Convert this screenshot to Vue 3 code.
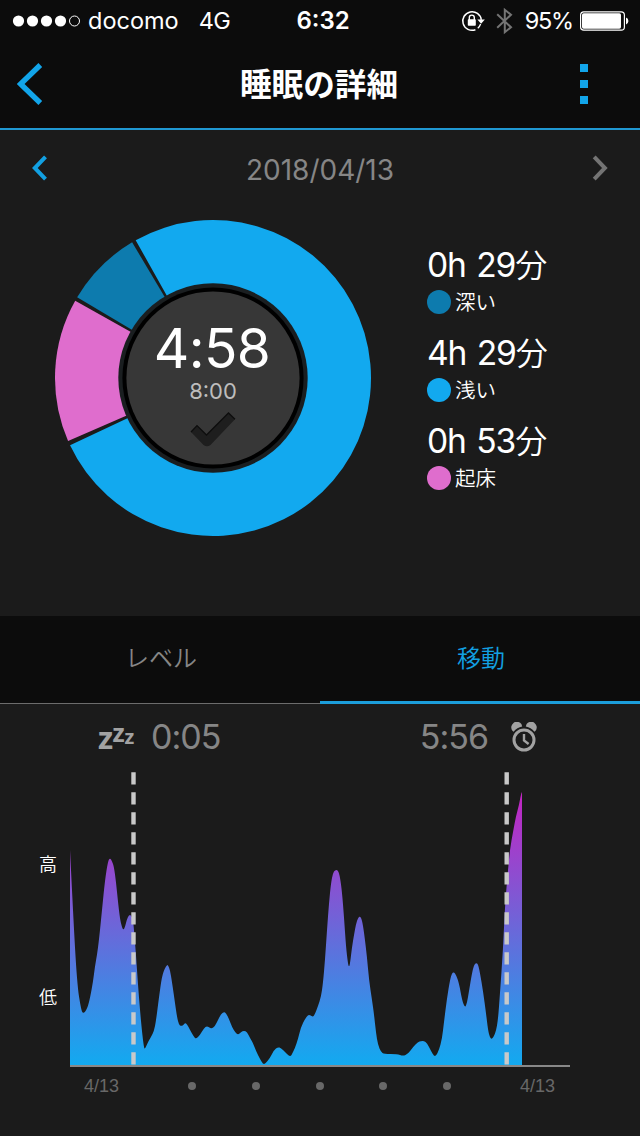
<template>
  <div class="sleep-page">
    <!-- ステータスバー -->
    <div class="status-bar">
      <div class="status-bar__left">
        <svg class="signal" width="70" height="14" viewBox="0 0 70 14">
          <circle v-for="i in 4" :key="i" :cx="i * 14 - 7.5" cy="7" r="5.6" fill="#fff" />
          <circle cx="62.5" cy="7" r="5" fill="none" stroke="#fff" stroke-width="1" />
        </svg>
        <span class="carrier">docomo</span>
        <span class="network">4G</span>
      </div>
      <div class="status-bar__time">6:32</div>
      <div class="status-bar__right">
        <svg class="lock" width="24" height="22" viewBox="0 0 24 22">
          <path d="M14.4 19.7A9.3 9.3 0 1 1 20.3 9.8" fill="none" stroke="#fff" stroke-width="1.5" />
          <path d="M16.4 9.4h7.4l-3.7 4.4z" fill="#fff" />
          <path d="M19.6 14a9.3 9.3 0 0 1-2.8 4.2" fill="none" stroke="#fff" stroke-width="1.3" />
          <rect x="6.8" y="9.3" width="8" height="6.4" rx="0.8" fill="#fff" />
          <path d="M8.3 10V7.6a2.5 2.5 0 0 1 5 0V10" fill="none" stroke="#fff" stroke-width="1.4" />
        </svg>
        <svg class="bluetooth" width="17" height="28" viewBox="0 0 17 28">
          <path d="M1.2 7.3L15 20.2L8.8 25.2V2.8L15 7.8L1.2 20.7" fill="none" stroke="#747474" stroke-width="2" />
        </svg>
        <span class="percent">95%</span>
        <svg class="battery" width="50" height="20" viewBox="0 0 50 20">
          <rect x="0.6" y="0.9" width="43.8" height="18.2" rx="3.2" fill="none" stroke="#fff" stroke-width="1.2" />
          <rect x="2" y="2.3" width="39" height="15.4" rx="1.6" fill="#fff" />
          <path d="M46 6.6a3.6 3.6 0 0 1 0 6.8z" fill="#fff" />
        </svg>
      </div>
    </div>

    <!-- ヘッダー -->
    <header class="header">
      <button class="icon-btn" aria-label="戻る">
        <svg width="26" height="42" viewBox="0 0 26 42">
          <path d="M23.3 2L3.6 21L23.3 40" fill="none" stroke="#12a5ea" stroke-width="5.4" />
        </svg>
      </button>
      <h1 class="header__title">睡眠の詳細</h1>
      <button class="icon-btn menu" aria-label="メニュー">
        <i v-for="i in 3" :key="i" class="menu__dot"></i>
      </button>
    </header>

    <!-- 日付 -->
    <div class="date-row">
      <svg width="16" height="26" viewBox="0 0 16 26">
        <path d="M13.5 1.8L2.8 13L13.5 24.2" fill="none" stroke="#12a0e2" stroke-width="4" />
      </svg>
      <span class="date-row__text">2018/04/13</span>
      <svg width="16" height="26" viewBox="0 0 16 26">
        <path d="M2.2 1.8L12.9 13L2.2 24.2" fill="none" stroke="#747474" stroke-width="4" />
      </svg>
    </div>

    <!-- 睡眠の内訳 -->
    <section class="summary">
      <div class="donut">
        <svg class="donut__svg" width="318" height="318" viewBox="-159 -159 318 318">
          <path v-for="s in slices" :key="s.color" :d="slicePath(s)" :fill="s.color" />
          <circle r="94.7" fill="#1a1e20" />
          <circle r="90.6" fill="#000" />
          <circle r="86.6" fill="#373737" />
        </svg>
        <div class="donut__center">
          <div class="donut__time">4:58</div>
          <div class="donut__goal">8:00</div>
          <svg class="donut__check" width="46" height="36" viewBox="0 0 46 36">
            <path d="M1 20L7 13.6L16.5 23L38.5 1L45 7.2L20.5 33Q17 35.6 13.5 33Z" fill="#1e1e1e" />
            <path d="M1 20L7 13.6L16.5 23L38.5 1L45 7.2" fill="none" stroke="#0d0d0d" stroke-width="1.3" />
          </svg>
        </div>
      </div>
      <ul class="legend">
        <li v-for="item in legend" :key="item.label" class="legend__item">
          <div class="legend__value">{{ item.value }}<span class="legend__unit">分</span></div>
          <div class="legend__label">
            <i class="legend__dot" :style="{ background: item.color }"></i>
            <span>{{ item.label }}</span>
          </div>
        </li>
      </ul>
    </section>

    <!-- タブ -->
    <nav class="tabs">
      <button
        v-for="tab in tabs"
        :key="tab"
        class="tab"
        :class="{ 'tab--active': tab === activeTab }"
        @click="activeTab = tab"
      >{{ tab }}</button>
    </nav>

    <!-- 移動グラフ -->
    <section class="chart">
      <div class="chart__times">
        <div class="chart__start">
          <div class="zzz">
            <span class="zzz__l">z</span>
            <span class="zzz__m">z</span>
            <span class="zzz__s">z</span>
          </div>
          <span>0:05</span>
        </div>
        <div class="chart__end">
          <span>5:56</span>
          <svg width="26" height="30" viewBox="0 0 26 30">
            <circle cx="13" cy="18" r="10" fill="none" stroke="#a2a2a2" stroke-width="3" />
            <path d="M13 12V18.4L17.6 22" fill="none" stroke="#a2a2a2" stroke-width="2.4" />
            <path d="M1.4 8.8A5.4 5.4 0 0 1 10.4 2L11.2 4.6Q6 5.6 2.6 9.8z" fill="#a2a2a2" />
            <path d="M24.6 8.8A5.4 5.4 0 0 0 15.6 2L14.8 4.6Q20 5.6 23.4 9.8z" fill="#a2a2a2" />
          </svg>
        </div>
      </div>
      <div class="chart__body">
        <div class="chart__levels">
          <span>高</span>
          <span>低</span>
        </div>
        <svg class="chart__plot" width="500" height="298" viewBox="70 770 500 298">
          <defs>
            <linearGradient id="moveFill" gradientUnits="userSpaceOnUse" x1="0" y1="792" x2="0" y2="1065">
              <stop offset="0" stop-color="#c424c2" />
              <stop offset="1" stop-color="#12aaf0" />
            </linearGradient>
          </defs>
          <path :d="areaPath" fill="url(#moveFill)" />
          <path d="M70 1066H570" stroke="#888" stroke-width="2" />
          <path
            v-for="x in [133.5, 506.7]"
            :key="x"
            :d="`M${x} 772.2V1065`"
            stroke="#c9c9c9"
            stroke-width="4.4"
            stroke-dasharray="12.4 7.6"
          />
        </svg>
      </div>
      <div class="chart__axis">
        <span>4/13</span>
        <div class="chart__ticks">
          <i v-for="i in 5" :key="i" class="chart__tick"></i>
        </div>
        <span>4/13</span>
      </div>
    </section>
  </div>
</template>

<script setup>
import { ref, computed } from 'vue'

const tabs = ['レベル', '移動']
const activeTab = ref('移動')

const legend = [
  { value: '0h 29', label: '深い', color: '#0d7bae' },
  { value: '4h 29', label: '浅い', color: '#12a9ef' },
  { value: '0h 53', label: '起床', color: '#df6dcd' },
]

// 角度は真上から時計回り
const slices = [
  { color: '#12a9ef', from: 330.7, to: 604.8 },
  { color: '#0d7bae', from: 300.7, to: 329.2 },
  { color: '#df6dcd', from: 246.5, to: 299.3 },
]

function slicePath({ from, to }) {
  const at = (deg, r) => {
    const a = (deg * Math.PI) / 180
    return `${(r * Math.sin(a)).toFixed(2)} ${(-r * Math.cos(a)).toFixed(2)}`
  }
  const large = to - from > 180 ? 1 : 0
  return `M0 0L${at(from, 158)}A158 158 0 ${large} 1 ${at(to, 158)}Z`
}

// 移動量のサンプル [x, y]
const points = [
  [70, 850], [72, 890], [74, 930], [76, 965], [78, 990], [80, 1003], [82, 1012.5], [84, 1013],
  [86, 1010.5], [88, 1006], [90, 998], [93, 982], [95, 966], [97, 955], [99, 940], [102, 910],
  [105, 880], [108, 861], [110, 858], [112, 861], [114, 867], [116, 882], [118, 902], [120, 919],
  [122, 927.5], [123.5, 930], [125, 927], [127, 919], [129, 915], [131, 915], [133, 920], [134, 930],
  [136, 955], [138, 985], [140, 1010], [142, 1032], [144, 1048], [145, 1049], [148, 1042], [151, 1037],
  [154, 1031], [156, 1021], [159, 997], [162, 976], [165, 968], [167, 965], [168, 965], [170, 970],
  [172, 982], [175, 1003], [177, 1017], [179, 1025], [181, 1026], [183, 1025.5], [185, 1023], [187, 1024],
  [190, 1030], [194, 1037], [196, 1039], [200, 1035], [204, 1028], [207, 1026], [210, 1028], [212, 1028.5],
  [215, 1026], [218, 1020], [221, 1014], [224, 1012], [226, 1013], [229, 1019], [232, 1027], [235, 1032],
  [238, 1035], [241, 1032], [244, 1030.5], [247, 1032], [250, 1038], [253, 1043], [256, 1051], [260, 1059],
  [263, 1064], [265, 1064], [270, 1058], [274, 1050], [278, 1047], [281, 1048], [285, 1052], [289, 1056],
  [291, 1056], [292, 1054], [295, 1048], [298, 1039], [301, 1027], [305, 1019], [308, 1015], [310, 1015],
  [313, 1017], [315, 1014], [318, 1006], [321, 997], [323, 983], [325, 960], [327, 930], [329, 903],
  [331, 883], [333, 873], [335, 870], [338, 870], [340, 877], [342, 892], [344, 917], [346, 947],
  [348, 964], [349, 967], [350, 964], [352, 947], [354, 935], [356, 924], [358, 918], [360, 916],
  [362, 920], [364, 932], [367, 957], [369, 980], [372, 1000], [374, 1014], [376, 1033], [378, 1045],
  [381, 1052], [384, 1054], [397, 1054], [403, 1056], [408, 1054], [413, 1047], [418, 1042], [421, 1041],
  [424, 1041], [427, 1043], [431, 1051], [434, 1056], [436, 1056], [439, 1050], [442, 1039], [444, 1022],
  [447, 998], [450, 980], [452, 973], [454, 972], [456, 975], [459, 983], [462, 1000], [465, 1008],
  [467, 1003], [469, 991], [472, 973], [474, 965], [476, 963], [478, 964], [480, 973], [483, 991],
  [486, 1013], [488, 1030], [490, 1038], [492, 1039], [494, 1036], [496, 1031], [498, 1020], [500, 993],
  [503, 950], [505, 905], [508, 870], [510, 849], [513, 832], [516, 816], [519, 805], [521, 794],
  [522, 792],
]

// 中点をつないで滑らかにする
const areaPath = computed(() => {
  let d = `M70 1066L${points[0].join(' ')}`
  for (let i = 1; i < points.length - 1; i++) {
    const [x, y] = points[i]
    const [nx, ny] = points[i + 1]
    d += `Q${x} ${y} ${(x + nx) / 2} ${(y + ny) / 2}`
  }
  return `${d}L522 792V1066Z`
})
</script>

<style>
body {
  background: #1b1b1b;
}
</style>

<style scoped>
.sleep-page {
  width: 640px;
  height: 1136px;
  overflow: hidden;
  background: #1b1b1b;
  color: #fff;
  font-family: Inter, "Noto Sans CJK JP", sans-serif;
}

svg {
  display: block;
  flex: none;
}

button {
  padding: 0;
  border: none;
  background: none;
  font-family: inherit;
  cursor: pointer;
}

.status-bar {
  display: grid;
  grid-template-columns: 1fr auto 1fr;
  align-items: center;
  height: 41px;
  padding: 0 10px 0 12px;
  background: #0c0c0c;
  font-size: 23.5px;
  line-height: 41px;
}

.status-bar__left,
.status-bar__right {
  display: flex;
  align-items: center;
}

.status-bar__right {
  justify-content: flex-end;
}

.status-bar__time {
  padding-left: 4px;
  font-size: 24px;
  font-weight: 600;
}

.carrier {
  margin-left: 6px;
}

.network {
  margin-left: 20px;
  letter-spacing: -0.5px;
}

.bluetooth {
  margin-left: 11px;
}

.percent {
  margin: 0 7px 0 12px;
  letter-spacing: -1.2px;
}

.header {
  display: flex;
  align-items: center;
  justify-content: space-between;
  box-sizing: border-box;
  height: 89px;
  padding: 0 52px 2px 17px;
  border-bottom: 2px solid #2098d2;
  background: #0c0c0c;
}

.icon-btn {
  width: 26px;
}

.header__title {
  margin: 2px 0 0 33px;
  font-size: 31.6px;
  font-weight: 700;
  line-height: 46px;
}

.menu {
  display: flex;
  flex-direction: column;
  align-items: flex-end;
  gap: 8px;
}

.menu__dot {
  width: 8px;
  height: 8px;
  background: #12a5ea;
}

.date-row {
  display: flex;
  align-items: center;
  justify-content: space-between;
  height: 76px;
  padding: 0 32px;
}

.date-row__text {
  padding-top: 3px;
  color: #868686;
  font-size: 28px;
}

.summary {
  display: flex;
  height: 410px;
}

.donut {
  display: grid;
  margin: 13px 0 0 54px;
}

.donut__svg,
.donut__center {
  grid-area: 1 / 1;
}

.donut__center {
  display: flex;
  flex-direction: column;
  align-items: center;
  padding-top: 105px;
}

.donut__time {
  padding-right: 2px;
  font-size: 55px;
  line-height: 48px;
  letter-spacing: -0.6px;
}

.donut__goal {
  margin-top: 8px;
  color: #bdbdbd;
  font-size: 22px;
  line-height: 22px;
}

.donut__check {
  margin-top: 10px;
}

.legend {
  margin: 34px 0 0 55px;
  padding: 0;
  list-style: none;
}

.legend__item {
  height: 88px;
}

.legend__value {
  height: 50px;
  font-size: 33.6px;
  line-height: 50px;
  letter-spacing: -1.1px;
  word-spacing: 2px;
  white-space: nowrap;
}

.legend__unit {
  font-size: 32px;
  font-weight: 350;
  line-height: 1;
}

.legend__label {
  display: flex;
  align-items: center;
  gap: 4px;
  height: 24px;
  font-size: 20.5px;
  font-weight: 350;
  line-height: 24px;
}

.legend__label span {
  padding-top: 2px;
}

.legend__dot {
  width: 24px;
  height: 24px;
  border-radius: 50%;
}

.tabs {
  display: flex;
  height: 88px;
  background: #0c0c0c;
}

.tab {
  box-sizing: border-box;
  flex: 1;
  padding: 0 0 7px 2px;
  border-bottom: 1px solid #6c6c6c;
  color: #868686;
  font-size: 24px;
  font-weight: 350;
}

.tab--active {
  padding-bottom: 5px;
  border-bottom: 3px solid #1c9edb;
  color: #12a0e2;
}

.chart__times {
  display: flex;
  justify-content: space-between;
  height: 66px;
  padding: 0 103px 0 98px;
  color: #868686;
  font-size: 34px;
  line-height: 66px;
  letter-spacing: -1px;
}

.chart__start,
.chart__end {
  display: flex;
  align-items: center;
}

.chart__start {
  gap: 16px;
}

.chart__end {
  gap: 23px;
}

.zzz {
  display: flex;
  width: 37px;
  color: #a2a2a2;
  font-family: "Open Sans", sans-serif;
  font-weight: 700;
  line-height: 40px;
  letter-spacing: 0;
}

.zzz__l {
  width: 14.5px;
  font-size: 31px;
}

.zzz__m {
  width: 12px;
  margin-top: -5px;
  font-size: 25px;
}

.zzz__s {
  width: 10px;
  margin-top: 0;
  font-size: 20px;
}

.chart__body {
  display: flex;
}

.chart__levels {
  display: flex;
  flex-direction: column;
  gap: 109px;
  width: 70px;
  padding-top: 83px;
  font-size: 18px;
  font-weight: 350;
  line-height: 24px;
  text-align: center;
  text-indent: 26px;
  box-sizing: border-box;
}

.chart__axis {
  display: flex;
  align-items: center;
  justify-content: space-between;
  padding: 8px 85px 0 84px;
  color: #686868;
  font-family: "Liberation Sans", sans-serif;
  font-size: 18px;
  line-height: 20px;
}

.chart__ticks {
  display: flex;
  justify-content: space-between;
  width: 263px;
}

.chart__tick {
  width: 8px;
  height: 8px;
  border-radius: 50%;
  background: #686868;
}
</style>
